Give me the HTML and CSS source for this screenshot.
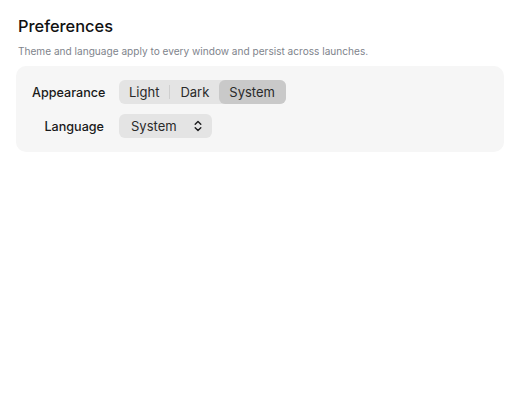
FILE: index.html
```html
<!DOCTYPE html>
<html lang="en">
<head>
<meta charset="utf-8">
<title>Preferences</title>
<link rel="stylesheet" href="styles.css">
</head>
<body>
<main class="page">
  <h1 class="title">Preferences</h1>
  <p class="subtitle">Theme and language apply to every window and persist across launches.</p>
  <section class="card">
    <div class="row">
      <span class="label">Appearance</span>
      <div class="segmented">
        <span class="seg">Light</span>
        <span class="sep"></span>
        <span class="seg">Dark</span>
        <span class="seg seg-active">System</span>
      </div>
    </div>
    <div class="row">
      <span class="label">Language</span>
      <div class="select">
        <span class="select-value">System</span>
        <svg class="chevron" width="8" height="12" viewBox="0 0 8 12" aria-hidden="true">
          <path d="M1.2 4.2 L4 1.4 L6.8 4.2 M1.2 7.8 L4 10.6 L6.8 7.8" fill="none" stroke="#1c1c1e" stroke-width="1.4" stroke-linecap="round" stroke-linejoin="round"/>
        </svg>
      </div>
    </div>
  </section>
</main>
</body>
</html>
```
FILE: styles.css
```css
* { box-sizing: border-box; }
html, body { margin: 0; padding: 0; background: #ffffff; }
body {
  font-family: Inter, "Noto Sans", "Liberation Sans", sans-serif;
  color: #1d1d1f;
}
.page { padding: 14px 16px 0 16px; }
.title {
  margin: 0 0 0 2px;
  font-size: 16.4px;
  font-weight: 500;
  line-height: 24px;
  color: #111111;
}
.subtitle {
  margin: 6px 0 0 2px;
  font-size: 10.1px;
  line-height: 14px;
  color: #80848c;
}
.card {
  margin-top: 8px;
  background: #f6f6f6;
  border-radius: 10px;
  padding: 14px 16px;
  display: flex;
  flex-direction: column;
  gap: 10px;
}
.row {
  display: flex;
  align-items: center;
  gap: 15px;
  height: 24px;
}
.label {
  width: 72px;
  text-align: right;
  font-size: 12.6px;
  font-weight: 500;
  color: #1a1a1a;
}
.segmented {
  display: flex;
  align-items: center;
  height: 24px;
  background: #e4e4e4;
  border-radius: 6px;
}
.seg {
  height: 24px;
  display: flex;
  align-items: center;
  padding: 0 10px;
  font-size: 13px;
  color: #2a2a2a;
  border-radius: 6px;
}
.seg-active { background: #c9c9c9; padding: 0 11px 0 10px; }
.sep {
  width: 1px;
  height: 14px;
  background: #cfcfcf;
}
.select {
  display: flex;
  align-items: center;
  height: 24px;
  width: 93px;
  padding: 0 10px 0 12px;
  background: #e4e4e4;
  border-radius: 6px;
  font-size: 13px;
  color: #2a2a2a;
}
.select-value { flex: 1; }
.chevron { display: block; }
```
